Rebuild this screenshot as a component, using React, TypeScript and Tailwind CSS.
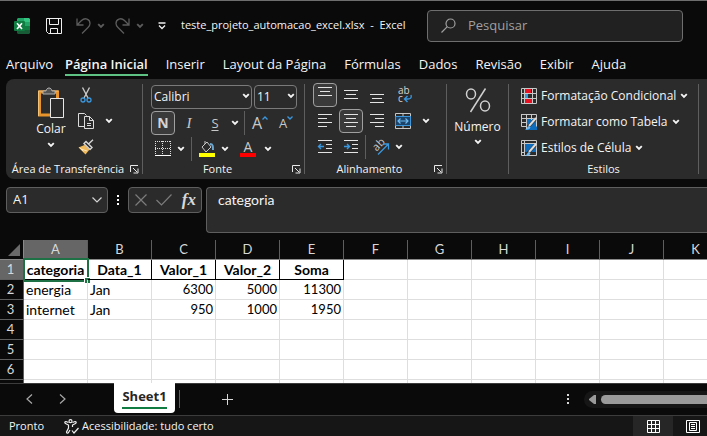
import type { ReactNode } from "react";

const columns = ["A", "B", "C", "D", "E", "F", "G", "H", "I", "J", "K"];

const rows: string[][] = [
  ["categoria", "Data_1", "Valor_1", "Valor_2", "Soma"],
  ["energia", "Jan", "6300", "5000", "11300"],
  ["internet", "Jan", "950", "1000", "1950"],
  [],
  [],
  [],
];

const tabs = ["Inserir", "Layout da Página", "Fórmulas", "Dados", "Revisão", "Exibir", "Ajuda"];

function Chevron({ className = "" }: { className?: string }) {
  return (
    <svg viewBox="0 0 8 6" className={`h-[6px] w-2 shrink-0 ${className}`} fill="none" stroke="currentColor" strokeWidth="1.900">
      <path d="M1.200 1.200 4 4 6.800 1.200" />
    </svg>
  );
}

function SmallCaret({ up }: { up?: boolean }) {
  return (
    <svg viewBox="0 0 6 4" className="mb-[10px] h-1 w-[6px] shrink-0" fill="none" stroke="#3a96dd" strokeWidth="1.400">
      <path d={up ? "M.5 3.500 3 1l2.500 2.500" : "M.5.500 3 3 5.500.5"} />
    </svg>
  );
}

function Tool({ label, active, className = "w-6", children }: { label: string; active?: boolean; className?: string; children: ReactNode }) {
  return (
    <button
      type="button"
      aria-label={label}
      className={`flex h-6 shrink-0 items-center justify-center rounded ${active ? "border border-[#a0a0a0] bg-[#3a3a3a]" : ""} ${className}`}
    >
      {children}
    </button>
  );
}

function Lines({ d }: { d: string }) {
  return (
    <svg viewBox="0 0 16 16" className="size-4" fill="none" stroke="#e4e4e4">
      <path d={d} />
    </svg>
  );
}

function Divider() {
  return <div className="my-[5px] w-px shrink-0 bg-[#5e5e5e]" />;
}

function SmallDivider({ className = "" }: { className?: string }) {
  return <div className={`h-6 w-px shrink-0 bg-[#5e5e5e] ${className}`} />;
}

function Group({ title, launcher, className, children }: { title: string; launcher?: boolean; className: string; children: ReactNode }) {
  return (
    <section aria-label={title} className={`flex shrink-0 flex-col pt-[3px] ${className}`}>
      <div className="h-[78px]">{children}</div>
      <div className="flex h-[18px] items-center justify-center">
        <span className="flex-1 text-center text-[11px]">{title}</span>
        {launcher && (
          <button type="button" aria-label={`Opções de ${title}`} className="mr-[3px] flex size-[9px] items-center">
            <svg viewBox="0 0 9 9" className="size-[9px]" fill="none" stroke="#e8e8e8">
              <path d="M.5 7V.5H8M3 3l4 4M8 3.500V8H3.500" />
            </svg>
          </button>
        )}
      </div>
    </section>
  );
}

function ExcelLogo() {
  return (
    <svg viewBox="0 0 16 16" className="size-4">
      <path d="M4 0h6v4H3V1z" fill="#21a366" />
      <path d="M10 0h5l1 1v3h-6z" fill="#33c481" />
      <path d="M3 4h7v4H3z" fill="#107c41" />
      <path d="M10 4h6v4h-6z" fill="#21a366" />
      <path d="M3 8h7v8H4l-1-1z" fill="#185c37" />
      <path d="M10 8h6v4h-6z" fill="#107c41" />
      <path d="M10 12h6v3l-1 1h-5z" fill="#185c37" />
      <rect x="0" y="3" width="11" height="10" rx="1" fill="#107c41" />
      <path d="M3 5.200 8 11M8 5.200 3 11" stroke="#fff" strokeWidth="1.600" />
    </svg>
  );
}

function TitleBar() {
  return (
    <header className="flex h-[50px] shrink-0 items-center border-t border-[#6e6e6e] pl-[14px]">
      <ExcelLogo />
      <button type="button" aria-label="Salvar" className="ml-4">
        <svg viewBox="0 0 16 16" className="size-4" fill="none" stroke="#f0f0f0">
          <path d="M.5.5h15v15h-13l-2-2zM3.500.5v6h9v-6M4.500 15.500v-5h7v5" />
        </svg>
      </button>
      <button type="button" aria-label="Desfazer" className="ml-[14px] flex items-center gap-[6px] text-[#5c5c5c]">
        <svg viewBox="0 0 15 16" className="h-4 w-[15px]" fill="none" stroke="currentColor" strokeWidth="1.300">
          <path d="M1 .5v6.500h6.500M1 7 5.500 2.500C9-.8 14 1 14 5.500c0 2-1 3-2 4L6 15.500" />
        </svg>
        <Chevron />
      </button>
      <button type="button" aria-label="Refazer" className="ml-[10px] flex items-center gap-[6px] text-[#5c5c5c]">
        <svg viewBox="0 0 15 16" className="h-4 w-[15px]" fill="none" stroke="currentColor" strokeWidth="1.300">
          <path d="M14 .5v6.500H7.500M14 7 9.500 2.500C6-.8 1 1 1 5.500c0 2 1 3 2 4l6 6" />
        </svg>
        <Chevron />
      </button>
      <button type="button" aria-label="Personalizar barra" className="ml-[14px]">
        <svg viewBox="0 0 8 8" className="size-2" fill="none" stroke="#f0f0f0" strokeWidth="1.300">
          <path d="M.5 1h7M1 3.500l3 3 3-3" />
        </svg>
      </button>
      <h1 className="ml-[15px] w-[246px] shrink-0 text-[11px] whitespace-pre">teste_projeto_automacao_excel.xlsx  -  Excel</h1>
      <label className="flex h-8 w-64 items-center rounded border border-[#6e6e6e] bg-[#212121] pl-[13px]">
        <svg viewBox="0 0 15 15" className="size-[15px] shrink-0" fill="none" stroke="#a0a0a0" strokeWidth="1.200">
          <circle cx="9.500" cy="5.500" r="4.500" />
          <path d="M6.300 8.700.5 14.500" />
        </svg>
        <input type="text" aria-label="Pesquisar" placeholder="Pesquisar" className="ml-3 w-full min-w-0 bg-transparent text-[13px] outline-none placeholder:text-[#a0a0a0]" />
      </label>
    </header>
  );
}

function RibbonTabs() {
  return (
    <nav className="flex h-[29px] shrink-0 items-start gap-[18px] pl-[6px] text-[13px] leading-5">
      <button type="button" className="mr-[-6px] h-[26px] shrink-0 border-b-2 border-transparent pt-1">Arquivo</button>
      <button type="button" className="h-[26px] shrink-0 border-b-2 border-[#5fc285] pt-1 font-semibold">Página Inicial</button>
      {tabs.map((tab) => (
        <button key={tab} type="button" className="h-[26px] shrink-0 border-b-2 border-transparent pt-1">{tab}</button>
      ))}
    </nav>
  );
}

function ClipboardGroup() {
  return (
    <Group title="Área de Transferência" launcher className="w-[136px]">
      <div className="flex">
        <button type="button" className="ml-6 flex w-[42px] flex-col items-center pt-[5px] text-[12px] leading-4">
          <svg viewBox="0 0 28 32" className="h-8 w-7" fill="none">
            <path d="M2.500 5h18v23h-18z" stroke="#e8932b" strokeWidth="3" />
            <path d="M1.500 29V4h20" stroke="#f5c377" />
            <path d="M6 7V4h3c.5-4 5.500-4 6 0h3v3z" fill="#555" stroke="#b0b0b0" />
            <path d="M13.500 11.500h13v19h-13z" fill="#2b2b2b" stroke="#e8e8e8" />
          </svg>
          <span className="mt-[2px]">Colar</span>
          <Chevron className="mt-[5px]" />
        </button>
        <div className="ml-[2px] flex flex-col gap-[2px] pt-px">
          <Tool label="Recortar">
            <svg viewBox="0 0 16 16" className="size-4" fill="none">
              <path d="M4.500.5 10 11M11.500.5 6 11" stroke="#c8c8c8" strokeWidth="1.400" />
              <circle cx="5" cy="13" r="2" stroke="#3a96dd" strokeWidth="1.300" />
              <circle cx="11" cy="13" r="2" stroke="#3a96dd" strokeWidth="1.300" />
            </svg>
          </Tool>
          <div className="flex">
            <Tool label="Copiar">
              <svg viewBox="0 0 16 16" className="size-4" fill="#2b2b2b" stroke="#dcdcdc">
                <path d="M6.500 13.500h-6V.5h6l2 2" />
                <path d="M6.500 3.500h5l4 4v8h-9zM11.500 3.500v4h4M9 10.500h4M9 12.500h4" />
              </svg>
            </Tool>
            <Tool label="Opções de cópia" className="ml-[5px] w-3"><Chevron /></Tool>
          </div>
          <Tool label="Pincel de Formatação">
            <svg viewBox="0 0 16 16" className="size-4" fill="none">
              <path d="m.5 8.500 6-2.500 5 4.500-4 5z" fill="#f0b95a" />
              <path d="m3 10 6 2M1.500 8.500l4 4" stroke="#fae3b4" />
              <path d="m6 4.500 6 6 2-2-6-6zM10.500 5 15 .8" stroke="#d8d8d8" strokeWidth="1.400" />
            </svg>
          </Tool>
        </div>
      </div>
    </Group>
  );
}

function FontGroup() {
  return (
    <Group title="Fonte" launcher className="w-[161px]">
      <div className="ml-2 flex flex-col gap-[2px] pt-px">
        <div className="flex gap-[2px]">
          <div className="relative">
            <select aria-label="Fonte" className="h-6 w-[101px] appearance-none rounded border border-[#7a7a7a] bg-[#2b2b2b] pl-[2px] text-[12px] leading-5">
              <option>Calibri</option>
            </select>
            <Chevron className="pointer-events-none absolute top-[10px] right-[2px]" />
          </div>
          <div className="relative">
            <select aria-label="Tamanho da fonte" className="h-6 w-[43px] appearance-none rounded border border-[#7a7a7a] bg-[#2b2b2b] pl-[2px] text-[12px] leading-5">
              <option>11</option>
            </select>
            <Chevron className="pointer-events-none absolute top-[10px] right-[2px]" />
          </div>
        </div>
        <div className="flex">
          <Tool label="Negrito" active><span className="text-[14px] leading-4 font-bold text-[#d4d4d4]">N</span></Tool>
          <Tool label="Itálico" className="ml-[2px] w-6"><span className="font-['Liberation_Serif',serif] text-[15px] leading-4 text-[#c8c8c8] italic">I</span></Tool>
          <Tool label="Sublinhado" className="ml-[2px] w-6"><span className="text-[13px] leading-4 text-[#c8c8c8] underline underline-offset-2">S</span></Tool>
          <Tool label="Opções de sublinhado" className="w-4"><Chevron /></Tool>
          <SmallDivider className="ml-[1px]" />
          <Tool label="Aumentar fonte" className="ml-[3px] w-6 text-[#c8c8c8]">
            <span className="text-[16px] leading-5">A</span>
            <SmallCaret up />
          </Tool>
          <Tool label="Diminuir fonte" className="ml-[2px] w-6 text-[#c8c8c8]">
            <span className="text-[13px] leading-5">A</span>
            <SmallCaret />
          </Tool>
        </div>
        <div className="flex">
          <Tool label="Bordas">
            <svg viewBox="0 0 16 16" className="size-4" fill="none" stroke="#e0e0e0">
              <path d="M0 .5h16M0 7.500h16M.5 0v14M7.500 0v14M15.500 0v14" strokeDasharray="1 1" />
              <path d="M0 14.500h16" stroke="#fff" />
            </svg>
          </Tool>
          <Tool label="Opções de bordas" className="w-3"><Chevron /></Tool>
          <SmallDivider className="ml-1" />
          <Tool label="Cor de preenchimento" className="ml-[3px] w-6">
            <svg viewBox="0 0 16 16" className="size-4" fill="none">
              <path d="m3 6 5-5 4 5-5 5zM6 3V0" stroke="#c8c8c8" />
              <path d="M11 3c3 0 3 2 3 6" stroke="#6ba6cf" strokeWidth="2" />
              <path d="M0 12h16v4H0z" fill="#ffff00" />
            </svg>
          </Tool>
          <Tool label="Opções de preenchimento" className="w-3"><Chevron /></Tool>
          <Tool label="Cor da fonte" className="ml-[5px] w-6">
            <span className="flex w-4 flex-col items-center border-b-4 border-[#ff0000] text-[14px] leading-3 text-[#c8c8c8]">A</span>
          </Tool>
          <Tool label="Opções de cor" className="ml-[2px] w-3"><Chevron /></Tool>
        </div>
      </div>
    </Group>
  );
}

function AlignmentGroup() {
  return (
    <Group title="Alinhamento" launcher className="w-[141px]">
      <div className="ml-2 flex flex-col gap-[2px] pt-px">
        <div className="flex gap-[2px]">
          <Tool label="Alinhar em cima" active><Lines d="M1 .5h14M3 4.500h10M1 8.500h14" /></Tool>
          <Tool label="Alinhar no meio"><Lines d="M1 3.500h14M3 7.500h10M1 11.500h14" /></Tool>
          <Tool label="Alinhar embaixo"><Lines d="M1 7.500h14M3 11.500h10M1 15.500h14" /></Tool>
          <Tool label="Quebrar texto" className="ml-[2px] w-6">
            <svg viewBox="0 0 20 22" className="h-[22px] w-5" fill="none">
              <text fontSize="10" fill="#d4d4d4">
                <tspan x="3" y="10">ab</tspan>
                <tspan x="3" y="18">c</tspan>
              </text>
              <path d="M16 11c1 3-1 4-3 4h-3M12.500 12 9.500 15l3 3" stroke="#3a96dd" strokeWidth="1.400" />
            </svg>
          </Tool>
        </div>
        <div className="flex gap-[2px]">
          <Tool label="Alinhar à esquerda"><Lines d="M1 1.500h14M1 5.500h9M1 9.500h14M1 13.500h9" /></Tool>
          <Tool label="Centralizar" active><Lines d="M1 1.500h14M3 5.500h10M1 9.500h14M3 13.500h10" /></Tool>
          <Tool label="Alinhar à direita"><Lines d="M1 1.500h14M6 5.500h9M1 9.500h14M6 13.500h9" /></Tool>
          <Tool label="Mesclar e centralizar">
            <svg viewBox="0 0 16 16" className="size-4" fill="none">
              <path d="M.5.500h15v15H.5zM8 0v4M8 12v4" stroke="#c8c8c8" />
              <path d="M.5 3.500h15v9H.5z" fill="#1d4468" stroke="#3a96dd" />
              <path d="M3 8h10M5.500 5.500 3 8l2.500 2.500M10.500 5.500 13 8l-2.500 2.500" stroke="#6cb8f0" strokeWidth="1.200" />
            </svg>
          </Tool>
          <Tool label="Opções de mesclagem" className="ml-[3px] w-3"><Chevron /></Tool>
        </div>
        <div className="flex">
          <Tool label="Diminuir recuo">
            <svg viewBox="0 0 16 16" className="size-4" fill="none" stroke="#e4e4e4">
              <path d="M1 1.500h14M9 5.500h6M9 9.500h6M1 13.500h14" />
              <path d="M1.500 7.500H7M4 5 1.500 7.500 4 10" stroke="#3a96dd" strokeWidth="1.400" />
            </svg>
          </Tool>
          <Tool label="Aumentar recuo" className="ml-[2px] w-6">
            <svg viewBox="0 0 16 16" className="size-4" fill="none" stroke="#e4e4e4">
              <path d="M1 1.500h14M9 5.500h6M9 9.500h6M1 13.500h14" />
              <path d="M1 7.500h5.500M4 5l2.500 2.500L4 10" stroke="#3a96dd" strokeWidth="1.400" />
            </svg>
          </Tool>
          <SmallDivider className="ml-[2px]" />
          <Tool label="Orientação" className="ml-[3px] w-6">
            <svg viewBox="0 0 24 24" className="size-6" fill="none">
              <text x="4" y="14" fontSize="11" fill="#c8c8c8" transform="rotate(-45 9 11)">ab</text>
              <path d="M9 19.500 19 9.500M14 9h5.500v5.500" stroke="#3a96dd" strokeWidth="1.300" />
            </svg>
          </Tool>
          <Tool label="Opções de orientação" className="w-3"><Chevron /></Tool>
        </div>
      </div>
    </Group>
  );
}

function NumberGroup() {
  return (
    <button type="button" className="flex w-[61px] shrink-0 flex-col items-center pt-2 text-[12px] leading-4">
      <svg viewBox="0 0 26 26" className="size-[26px]" fill="none" stroke="#d0d0d0" strokeWidth="1.500">
        <ellipse cx="6" cy="7" rx="4.500" ry="5" />
        <ellipse cx="20" cy="19" rx="4.500" ry="5" />
        <path d="M20.500 1.500 5.500 25" />
      </svg>
      <span className="mt-[6px]">Número</span>
      <Chevron className="mt-1" />
    </button>
  );
}

function StylesGroup() {
  return (
    <Group title="Estilos" className="w-[189px]">
      <div className="ml-3 flex flex-col items-start pt-px text-[12px]">
        <button type="button" className="flex h-[26px] items-center gap-1">
          <svg viewBox="0 0 16 16" className="size-4" fill="none">
            <path d="M.5.500h15v15H.5zM0 5.500h16M0 10.500h16M3.500 0v16M11.500 0v16" stroke="#c8c8c8" />
            <path d="M4 1h6v4H4zM4 11h7v4H4z" fill="#e81123" />
            <path d="M4 6h3v4H4z" fill="#3a96dd" />
          </svg>
          <span>Formatação Condicional</span>
          <Chevron />
        </button>
        <button type="button" className="flex h-[26px] items-center gap-1">
          <svg viewBox="0 0 16 16" className="size-4" fill="none">
            <path d="M5 5h11v11H5z" fill="#0f6cbd" />
            <path d="M.5.500h15v12M.5 0v12.500H6M0 4.500h16M0 8.500h6M5.500 0v15M10.500 0v6" stroke="#c8c8c8" />
            <path d="m7 13 7.500-8" stroke="#2b2b2b" strokeWidth="3" />
            <path d="m8 12 7-8" stroke="#dcdcdc" strokeWidth="2" />
            <path d="M4 15.500c2 0 2-3 4-3.500l1.500 1.500c-1 2-3 2.500-5.500 2z" fill="#6cb8f0" />
          </svg>
          <span>Formatar como Tabela</span>
          <Chevron />
        </button>
        <button type="button" className="flex h-[26px] items-center gap-1">
          <svg viewBox="0 0 16 16" className="size-4" fill="none">
            <path d="M4 4h11v8H4z" fill="#0f6cbd" />
            <path d="M.5.500h15v15H.5zM0 3.500h16M3.500 0v16M0 12.500h4" stroke="#c8c8c8" />
            <path d="m7 13 7.500-8" stroke="#2b2b2b" strokeWidth="3" />
            <path d="m8 12 7-8" stroke="#dcdcdc" strokeWidth="2" />
            <path d="M4 15.500c2 0 2-3 4-3.500l1.500 1.500c-1 2-3 2.500-5.500 2z" fill="#6cb8f0" />
          </svg>
          <span>Estilos de Célula</span>
          <Chevron />
        </button>
      </div>
    </Group>
  );
}

function Ribbon() {
  return (
    <div className="ml-[6px] flex h-[100px] shrink-0 overflow-hidden rounded-l-lg bg-[#2b2b2b]">
      <ClipboardGroup />
      <Divider />
      <FontGroup />
      <Divider />
      <AlignmentGroup />
      <Divider />
      <NumberGroup />
      <Divider />
      <StylesGroup />
      <Divider />
    </div>
  );
}

function FormulaBar() {
  return (
    <div className="mt-2 mb-[7px] flex h-[46px] shrink-0 items-start pl-[6px] text-[13px]">
      <div className="flex h-[26px] w-[102px] shrink-0 items-center rounded border border-[#5e5e5e] bg-[#2b2b2b] pr-[5px] pl-[6px]">
        <input type="text" aria-label="Caixa de nome" defaultValue="A1" className="min-w-0 flex-1 bg-transparent outline-none" />
        <button type="button" aria-label="Abrir lista de nomes">
          <svg viewBox="0 0 10 6" className="h-[6px] w-[10px]" fill="none" stroke="#d4d4d4" strokeWidth="1.200">
            <path d="m.5.500 4.500 4.500L9.500.5" />
          </svg>
        </button>
      </div>
      <div className="flex h-[26px] w-5 shrink-0 flex-col items-center justify-center gap-[2px]">
        <i className="size-[2px] bg-white" />
        <i className="size-[2px] bg-white" />
        <i className="size-[2px] bg-white" />
      </div>
      <div className="mr-1 flex h-[26px] w-[74px] shrink-0 items-center justify-between rounded border border-[#5e5e5e] bg-[#2b2b2b] pr-[5px] pl-[6px]">
        <button type="button" aria-label="Cancelar">
          <svg viewBox="0 0 12 12" className="size-3" fill="none" stroke="#7c7c7c" strokeWidth="1.200"><path d="m.5.500 11 11M11.500.5.5 11.500" /></svg>
        </button>
        <button type="button" aria-label="Inserir">
          <svg viewBox="0 0 16 12" className="h-3 w-4" fill="none" stroke="#7c7c7c" strokeWidth="1.200"><path d="m.5 6 5 5L15.500.5" /></svg>
        </button>
        <button type="button" className="font-['Liberation_Serif',serif] text-[17px] leading-5 font-bold text-[#d8d8d8] italic">fx</button>
      </div>
      <textarea
        aria-label="Barra de fórmulas"
        defaultValue="categoria"
        className="h-[46px] min-w-0 flex-1 resize-none overflow-hidden rounded-l border border-r-0 border-[#5e5e5e] bg-[#2b2b2b] pt-[2px] pl-[11px] font-[Lato,sans-serif] text-[14px] leading-5 outline-none"
      />
    </div>
  );
}

function cellClass(row: number, col: number) {
  if (row === 0 && col < 5) return "border-black text-center font-bold";
  return col > 1 ? "border-[#dedede] text-right text-[13px]" : "border-[#dedede] text-left";
}

function Sheet() {
  return (
    <main className="min-h-0 flex-1 overflow-hidden bg-white">
      <table className="w-[728px] table-fixed border-separate border-spacing-0 font-[Lato,sans-serif] text-[14px] leading-[19px]">
        <colgroup>
          <col className="w-6" />
          {columns.map((c) => <col key={c} className="w-16" />)}
        </colgroup>
        <thead>
          <tr className="h-5 bg-[#0a0a0a] text-[13px] text-[#d8d8d8]">
            <td className="border-r border-b border-[#8a8a8a] p-0">
              <svg viewBox="0 0 12 12" className="ml-2 size-3" fill="#6a6a6a"><path d="M12 0v12H0z" /></svg>
            </td>
            {columns.map((c, i) => (
              <th key={c} scope="col" className={`border-r border-b border-r-[#5e5e5e] border-b-[#8a8a8a] p-0 font-normal ${i === 0 ? "bg-[#666666]" : ""}`}>{c}</th>
            ))}
          </tr>
        </thead>
        <tbody>
          {rows.map((row, r) => (
            <tr key={r} className="h-5 text-black">
              <th scope="row" className={`border-r border-b border-[#5e5e5e] p-0 pr-[2px] text-[13px] font-normal text-[#d8d8d8] ${r === 0 ? "bg-[#666666]" : "bg-[#0a0a0a]"}`}>{r + 1}</th>
              {columns.map((c, i) => (
                <td key={c} className={`relative border-r border-b p-0 px-[2px] ${cellClass(r, i)}`}>
                  {row[i]}
                  {r === 0 && i === 0 && (
                    <div className="absolute -inset-x-px -inset-y-[2px] -mr-px -mb-px border-2 border-[#1e7145]">
                      <div className="absolute -right-[3px] -bottom-[3px] size-[6px] border-t border-l border-white bg-[#1e7145]" />
                    </div>
                  )}
                </td>
              ))}
            </tr>
          ))}
          <tr className="h-5">
            <th className="border-r border-[#5e5e5e] bg-[#0a0a0a] p-0" />
            {columns.map((c) => <td key={c} className="border-r border-[#dedede] p-0" />)}
          </tr>
        </tbody>
      </table>
    </main>
  );
}

function SheetTabs() {
  return (
    <div className="flex h-8 shrink-0 items-start border-t border-[#3c3c3c] text-[#a8a8a8]">
      <button type="button" aria-label="Planilha anterior" className="ml-[26px] flex h-[30px] items-center">
        <svg viewBox="0 0 7 10" className="h-[10px] w-[7px]" fill="none" stroke="currentColor" strokeWidth="1.200"><path d="M6 .5 1 5l5 4.500" /></svg>
      </button>
      <button type="button" aria-label="Próxima planilha" className="ml-[26px] flex h-[30px] items-center">
        <svg viewBox="0 0 7 10" className="h-[10px] w-[7px]" fill="none" stroke="currentColor" strokeWidth="1.200"><path d="m1 .5 5 4.500-5 4.500" /></svg>
      </button>
      <button type="button" className="-mt-px ml-12 h-[30px] w-[61px] rounded-b bg-white px-2 pt-[2px] pb-1 text-[13px] font-bold text-[#262626]">
        <span className="block border-b-2 border-[#107c41] leading-[22px]">Sheet1</span>
      </button>
      <div className="mt-[6px] ml-1 h-[18px] w-px bg-[#5e5e5e]" />
      <button type="button" aria-label="Nova planilha" className="ml-[42px] flex h-[30px] items-center">
        <svg viewBox="0 0 11 11" className="size-[11px]" fill="none" stroke="#d8d8d8"><path d="M5.500 0v11M0 5.500h11" /></svg>
      </button>
      <div className="ml-auto flex h-[30px] w-[140px] items-center">
        <div className="flex flex-col gap-[2px]">
          <i className="size-[2px] bg-[#d8d8d8]" />
          <i className="size-[2px] bg-[#d8d8d8]" />
          <i className="size-[2px] bg-[#d8d8d8]" />
        </div>
        <div className="ml-[15px] flex h-[17px] flex-1 items-center gap-[5px] rounded-l-full bg-[#161616] pl-[5px]">
          <button type="button" aria-label="Rolar para a esquerda">
            <svg viewBox="0 0 7 9" className="h-[9px] w-[7px]" fill="#9a9a9a"><path d="M7 0v9H5L0 5V4l5-4z" /></svg>
          </button>
          <div className="h-[9px] flex-1 rounded-l-full bg-[#9a9a9a]" />
        </div>
      </div>
    </div>
  );
}

function StatusBar() {
  return (
    <footer className="flex h-[21px] shrink-0 items-center border-t border-[#3c3c3c] bg-[#161616] pl-[9px] text-[11px]">
      <span>Pronto</span>
      <button type="button" className="ml-5 flex items-center gap-[3px] font-medium">
        <svg viewBox="0 0 15 15" className="size-[15px]" fill="none" stroke="#f0f0f0" strokeWidth="1.200">
          <circle cx="6.500" cy="2.200" r="1.500" />
          <path d="M4.500 3.500 2 2.500C.5 2.500.5 4 1.500 4.500L4.500 6v3l-2 4c0 1.500 1.500 1.500 2 .5L6 11M8.500 3.500l2.500-1c1.500 0 1.500 1.500.5 2L8.500 6v2M8 11.500l2 2.500 4.500-5" />
        </svg>
        <span>Acessibilidade: tudo certo</span>
      </button>
      <div className="ml-auto flex h-full w-[74px]">
        <button type="button" aria-label="Normal" className="flex w-10 items-center justify-center bg-[#262626]">
          <svg viewBox="0 0 13 13" className="size-[13px]" fill="none" stroke="#fff"><path d="M.5.500h12v12H.5zM4.500 0v13M8.500 0v13M0 4.500h13M0 8.500h13" /></svg>
        </button>
        <button type="button" aria-label="Layout da Página" className="flex flex-1 items-center justify-center pl-[6px]">
          <svg viewBox="0 0 14 13" className="h-[13px] w-[14px]" fill="none" stroke="#fff"><path d="M.5.500h13v12H.5zM3.500 2.500h7v8h-7zM5 4.500h4M5 6.500h4M5 8.500h4" /></svg>
        </button>
      </div>
    </footer>
  );
}

export default function App() {
  return (
    <div className="flex h-screen flex-col overflow-hidden bg-[#0a0a0a] font-['Open_Sans',sans-serif] text-[#f4f4f4]">
      <TitleBar />
      <RibbonTabs />
      <Ribbon />
      <FormulaBar />
      <Sheet />
      <SheetTabs />
      <StatusBar />
    </div>
  );
}
